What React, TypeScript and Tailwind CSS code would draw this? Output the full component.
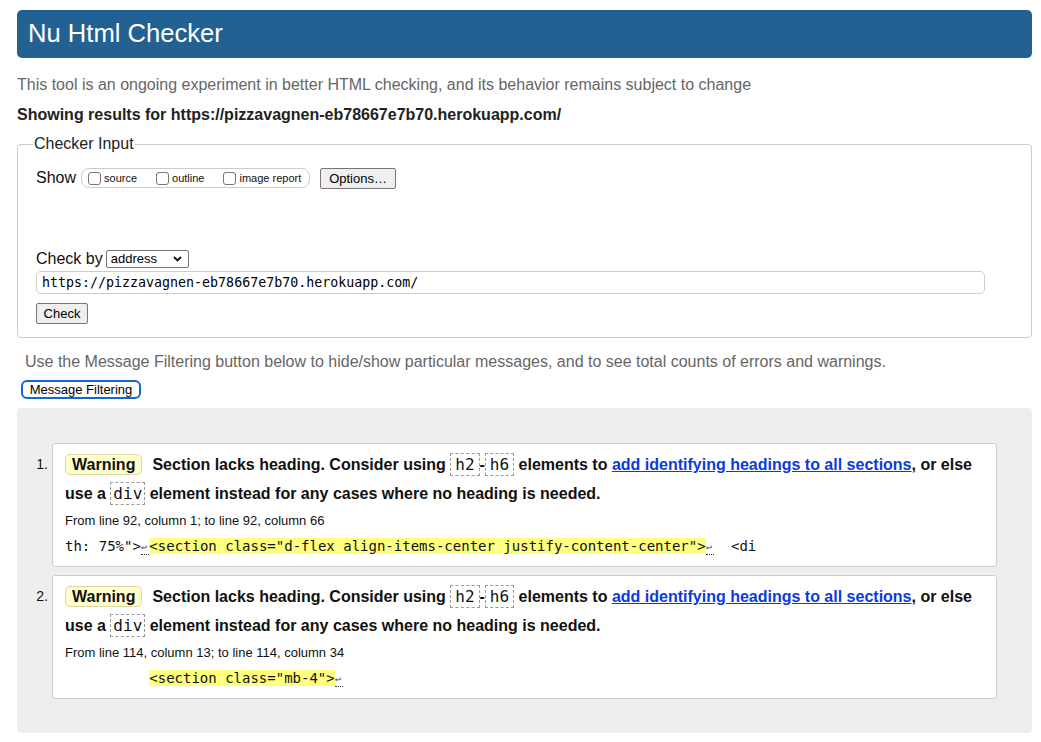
import React from 'react'

const sans = { fontFamily: '"Liberation Sans", Arial, Helvetica, sans-serif' }
const mono = '[font-family:"DejaVu_Sans_Mono",Menlo,monospace]'

const Code = ({ children, wide }: { children: React.ReactNode; wide?: boolean }) => (
    <code className={`${mono} font-normal text-[16px] border border-dashed border-[#999] bg-white ${wide ? 'px-[4px]' : 'px-[2px]'} py-[1px]`}>{children}</code>
)

const Lf = () => (
    <span className="inline-block w-[8.5px] text-[11px] text-[#666] border-b border-dotted border-[#333] leading-[12px]">↩</span>
)

const Message = ({ n, from, pre, lead, hl, post }: { n: number; from: string; pre: string; lead?: boolean; hl: string; post?: string }) => {
    return (
        <li className="flex">
            <div className="w-[35px] shrink-0 text-right pr-[4px] pt-[12px] text-[14px] leading-[18px] text-[#111]">{n}.</div>
            <div className="w-[945px] bg-white border border-[#ccc] rounded-[3px] pt-[6px] pb-[10px] px-[12px]">
                <p className="text-[16px] font-bold leading-[29px] text-[#111]">
                    <span className="bg-[#ffffcc] border border-[#ddd6a6] rounded-[5px] px-[6px] py-[1px] mr-[10px]">Warning</span>
                    Section lacks heading. Consider using <Code wide>h2</Code>-<Code wide>h6</Code> elements to{' '}
                    <a href="#" className="text-[#0b3bdc] underline">add identifying headings to all sections</a>, or else
                    <br />
                    use a <Code>div</Code> element instead for any cases where no heading is needed.
                </p>
                <p className="text-[13px] leading-[18px] mt-[4px] text-[#111]">{from}</p>
                <pre className={`${mono} text-[14px] leading-[20px] mt-[6px] text-[#111] whitespace-pre`}>
                    {pre}{lead && <Lf />}<span className="bg-[#ffff80]">{hl}</span><Lf />{post}
                </pre>
            </div>
        </li>
    )
}

const Box = ({ label }: { label: string }) => (
    <label className="flex items-center gap-[3px] text-[11px] leading-none">
        <input type="checkbox" className="appearance-none w-[13px] h-[13px] border border-[#767676] rounded-[3px] bg-white" />
        {label}
    </label>
)

export default function App() {
    return (
        <div className="bg-white min-h-[742px] pt-[10px] pb-[10px]" style={sans}>
            <div className="ml-[17px] w-[1015px] text-[#111]">
                <header className="h-[48px] bg-[#236192] rounded-[5px] flex items-center px-[11px]">
                    <h1 className="text-white text-[25.6px] leading-none">Nu Html Checker</h1>
                </header>

                <p className="mt-[18px] text-[16px] leading-[18px] text-[#666]">
                    This tool is an ongoing experiment in better HTML checking, and its behavior remains subject to change
                </p>
                <p className="mt-[12px] text-[16px] leading-[18px] font-bold text-[#222]">
                    Showing results for https://pizzavagnen-eb78667e7b70.herokuapp.com/
                </p>

                <fieldset className="mt-[11px] border border-[#ccc] rounded-[4px] px-[18px] pb-[13px]">
                    <legend className="ml-[-3px] px-[1px] text-[16px] leading-[18px] text-[#222]">Checker Input</legend>
                    <div className="mt-[14px] h-[22px] flex items-center">
                        <span className="text-[16px] mr-[5px]">Show</span>
                        <div className="h-[20px] w-[229px] border border-[#ccc] rounded-[8px] flex items-center pl-[6px] gap-[19px]">
                            <Box label="source" />
                            <Box label="outline" />
                            <Box label="image report" />
                        </div>
                        <button className="ml-[10px] h-[21px] w-[76px] bg-[#efefef] border border-[#767676] rounded-[2px] text-[13px] text-black">Options…</button>
                    </div>

                    <div className="mt-[61px] h-[18px] flex items-center">
                        <span className="text-[16px] mr-[3px]">Check by</span>
                        <div className="relative h-[18px] w-[83px] border border-[#767676] rounded-[2px] bg-white flex items-center pl-[4px] text-[13px] text-black">
                            address
                            <svg className="absolute right-[6px] top-[5px]" width="9" height="6" viewBox="0 0 9 6" fill="none">
                                <path d="M1 1l3.5 3.5L8 1" stroke="#111" strokeWidth="1.8" />
                            </svg>
                        </div>
                    </div>
                    <div className={`mt-[3px] h-[23px] w-[949px] border border-[#ccc] rounded-[5px] flex items-center px-[5px] ${mono} text-[13.3px] text-black`}>
                        https://pizzavagnen-eb78667e7b70.herokuapp.com/
                    </div>
                    <button className="mt-[9px] h-[21px] w-[52px] bg-[#efefef] border border-[#767676] rounded-[2px] text-[13px] text-black block">Check</button>
                </fieldset>

                <p className="mt-[15px] ml-[8px] text-[16px] leading-[18px] text-[#666]">
                    Use the Message Filtering button below to hide/show particular messages, and to see total counts of errors and warnings.
                </p>
                <button className="mt-[9px] ml-[4px] h-[19px] w-[120px] border-2 border-[#1167d8] rounded-[6px] bg-white text-[13px] text-black leading-none block">
                    Message Filtering
                </button>

                <div className="mt-[9px] bg-[#eeeeee] rounded-[4px] pt-[35px] pb-[34px]">
                    <ol className="flex flex-col gap-[8px]">
                        <Message
                            n={1}
                            from="From line 92, column 1; to line 92, column 66"
                            pre={'th: 75%">'}
                            lead
                            hl={'<section class="d-flex align-items-center justify-content-center">'}
                            post="  <di"
                        />
                        <Message
                            n={2}
                            from="From line 114, column 13; to line 114, column 34"
                            pre="          "
                            hl={'<section class="mb-4">'}
                        />
                    </ol>
                </div>
            </div>
        </div>
    )
}
